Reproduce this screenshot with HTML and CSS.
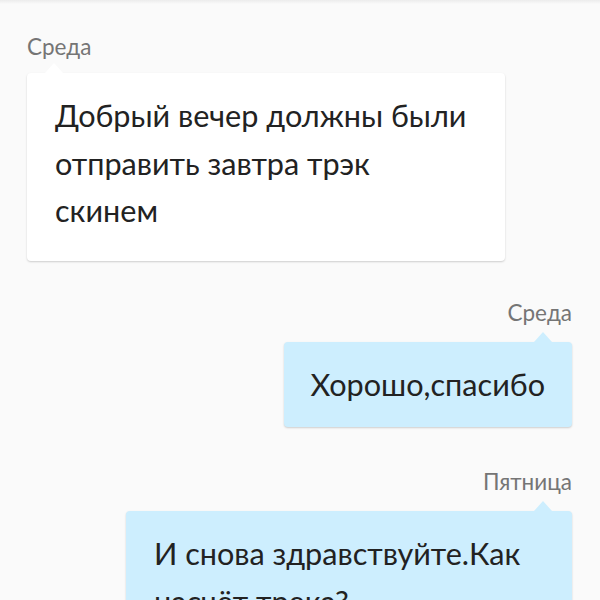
FILE: index.html
```html
<!DOCTYPE html>
<html lang="ru">
<head>
    <meta charset="UTF-8">
    <link rel="stylesheet" href="styles.css">
</head>
<body>
    <div class="topbar"></div>
    <div class="chat">
        <div class="msg in">
            <div class="day">Среда</div>
            <div class="bubble">Добрый вечер должны были отправить завтра трэк скинем</div>
        </div>
        <div class="msg out">
            <div class="day">Среда</div>
            <div class="bubble">Хорошо,спасибо</div>
        </div>
        <div class="msg out">
            <div class="day">Пятница</div>
            <div class="bubble wide">И снова здравствуйте.Как насчёт трека?</div>
        </div>
    </div>
</body>
</html>
```

FILE: styles.css
```css
body{
    margin: 0;
    background: #fafafa;
    font-family: Lato, "Noto Sans", sans-serif;
    overflow: hidden;
}
.topbar{
    height: 4px;
    background: linear-gradient(#ececec, #fafafa);
}
.chat{
    display: flex;
    flex-direction: column;
    padding: 0 28px 0 27px;
}
.msg{
    display: flex;
    flex-direction: column;
    margin-top: 29px;
}
.msg.in{
    align-items: flex-start;
}
.msg.out{
    align-items: flex-end;
    margin-top: 38px;
}
.msg.out + .msg.out{
    margin-top: 41px;
}
.day{
    font-size: 22.5px;
    line-height: 28px;
    color: #757575;
    margin-bottom: 15px;
}
.in .day{
    margin-bottom: 12px;
}
.bubble{
    position: relative;
    background: #fff;
    color: #222;
    font-size: 30.6px;
    line-height: 47.5px;
    padding: 19px 28px 26px 28px;
    border-radius: 4px;
    box-shadow: 0 1px 2px rgba(0,0,0,0.18);
    width: 422px;
}
.bubble::before{
    content: "";
    position: absolute;
    top: -10px;
    width: 0;
    height: 0;
    border-left: 9px solid transparent;
    border-right: 9px solid transparent;
    border-bottom: 10px solid #fff;
}
.in .bubble::before{
    left: 18px;
}
.out .bubble{
    background: #cdeefe;
    width: auto;
    padding: 19px 27px 19px 27px;
}
.out .bubble::before{
    right: 20px;
    border-bottom-color: #cdeefe;
}
.out .bubble.wide{
    width: 390px;
    padding: 19px 28px 19px 28px;
}
```
